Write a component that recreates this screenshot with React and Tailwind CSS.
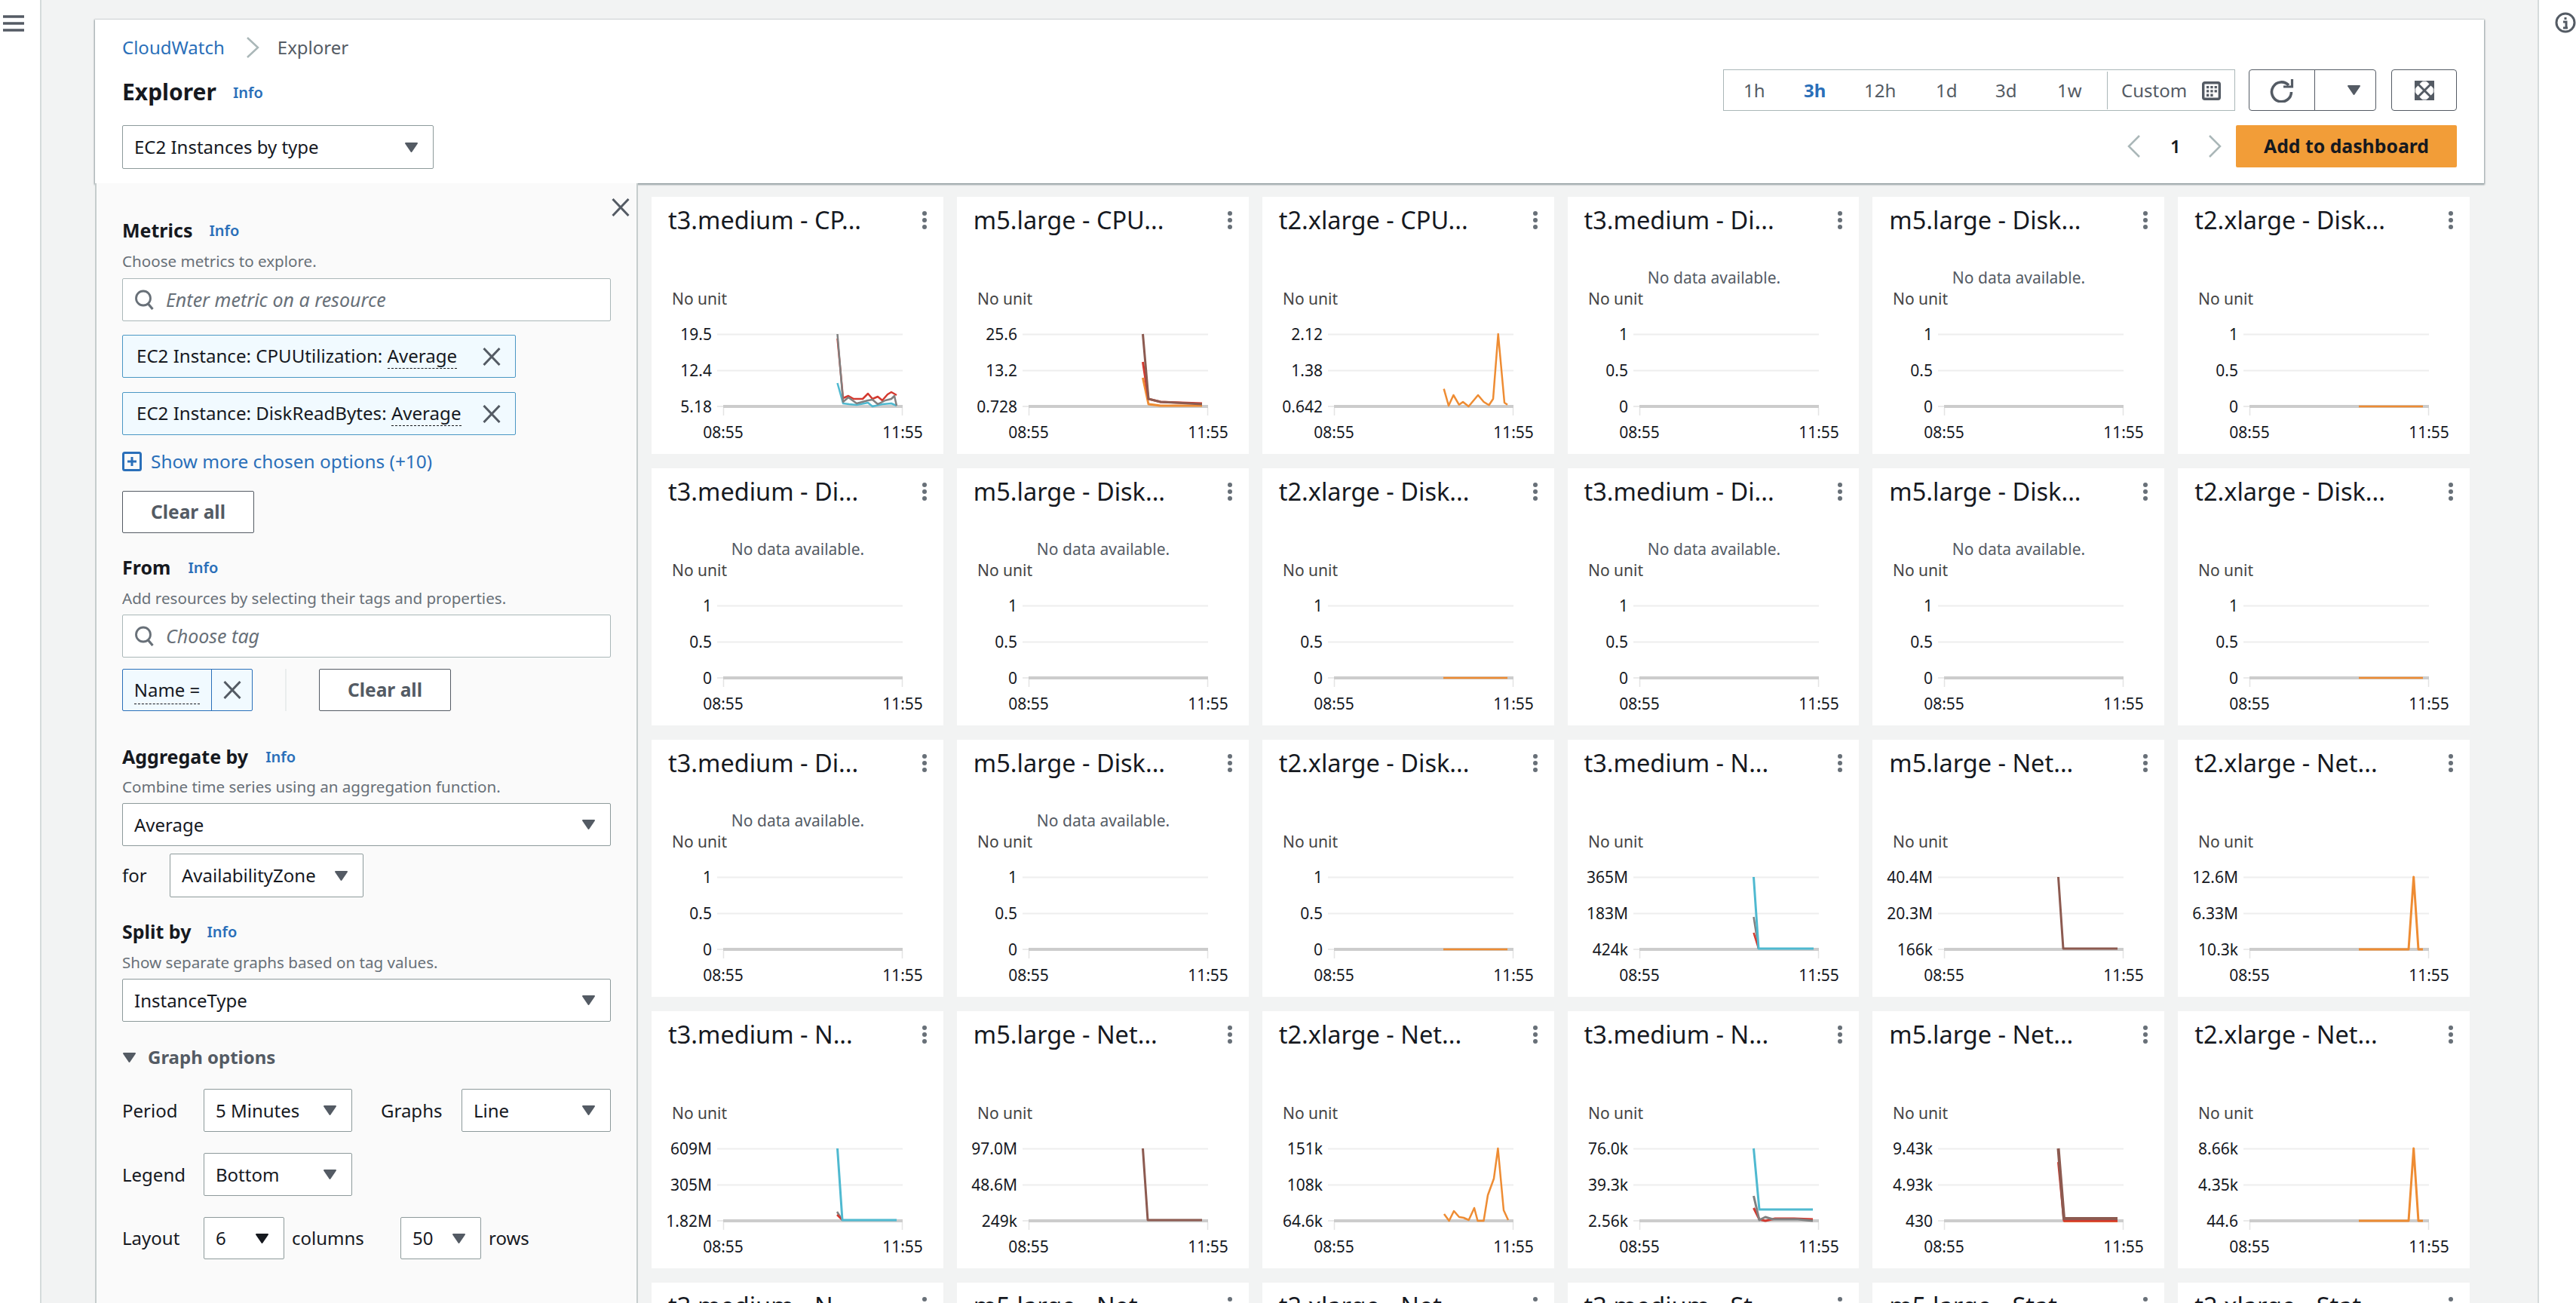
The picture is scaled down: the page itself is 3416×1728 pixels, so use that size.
import React from 'react';

const RED = '#d3392f';
const TEAL = '#4fb9d0';
const GRAY = '#808080';
const BROWN = '#8c5a50';
const ORANGE = '#ee8c33';

const Caret = ({ dark }) => (
    <svg width="19" height="15" viewBox="0 0 19 15" className="shrink-0">
        <path d="M2 2h15l-7.500 11z" fill={dark ? '#16191f' : '#545b64'} stroke={dark ? '#16191f' : '#545b64'} strokeWidth="2" strokeLinejoin="round" />
    </svg>
);

const CloseIcon = ({ size = 24 }) => (
    <svg width={size} height={size} viewBox="0 0 24 24" className="shrink-0">
        <path d="M1.500 1l21 22M22.500 1l-21 22" stroke="#545b64" strokeWidth="3" fill="none" />
    </svg>
);

const SearchIcon = () => (
    <svg width="27" height="27" viewBox="0 0 27 27" className="shrink-0">
        <circle cx="12" cy="11.500" r="9.500" stroke="#687078" strokeWidth="2.800" fill="none" />
        <path d="M18.500 19l6 7" stroke="#687078" strokeWidth="3.200" fill="none" />
    </svg>
);

const Info = () => <span className="text-[20px] font-semibold text-[#2a6fb9]">Info</span>;

const Heading = ({ title, gap, className }) => (
    <div className={`flex h-[36px] items-center ${className}`}>
        <span className="text-[25px] font-bold text-[#16191f]">{title}</span>
        <span className={gap}><Info /></span>
    </div>
);

const Desc = ({ children, className }) => (
    <div className={`h-[30px] text-[20.600px] leading-[30px] text-[#687078] ${className}`}>{children}</div>
);

const Select = ({ value, className, darkCaret }) => (
    <div className={`flex items-center justify-between rounded-[2px] border border-[#8d9a9b] bg-white pl-[15px] pr-[19px] text-[24px] text-[#16191f] ${className}`}>
        <span>{value}</span>
        <Caret dark={darkCaret} />
    </div>
);

const Autosuggest = ({ placeholder, className }) => (
    <div className={`flex h-[57px] items-center gap-[15px] rounded-[2px] border border-[#aab7b8] bg-white pl-[15px] ${className}`}>
        <SearchIcon />
        <span className="text-[25px] italic text-[#687078]">{placeholder}</span>
    </div>
);

const Token = ({ label, className }) => (
    <div className={`flex h-[57px] w-[522px] items-center justify-between rounded-[2px] border border-[#4a97c4] bg-[#f1faff] pl-[18px] pr-[19px] ${className}`}>
        <span className="text-[24.100px] text-[#16191f]">
            EC2 Instance: {label}: <span className="border-b border-dashed border-[#16191f]">Average</span>
        </span>
        <CloseIcon />
    </div>
);

const ClearAll = ({ className }) => (
    <div className={`flex h-[56px] w-[175px] items-center justify-center rounded-[2px] border border-[#545b64] bg-white text-[24.500px] font-bold text-[#545b64] ${className}`}>Clear all</div>
);

const Sidebar = () => (
    <aside className="w-[720px] shrink-0 border-x-2 border-[#c6cdcd] bg-[#fafafa] pl-[34px] pr-[34px]">
        <div className="-mr-[25px] flex justify-end pt-[20px]"><CloseIcon /></div>
        <Heading title="Metrics" gap="ml-[22px]" className="mt-[1px]" />
        <Desc className="mt-[7px]">Choose metrics to explore.</Desc>
        <Autosuggest placeholder="Enter metric on a resource" className="mt-[8px]" />
        <Token label="CPUUtilization" className="mt-[18px]" />
        <Token label="DiskReadBytes" className="mt-[19px]" />
        <div className="mt-[20px] flex h-[30px] items-center gap-[12px] text-[24.400px] text-[#2a6fb9]">
            <svg width="26" height="26" viewBox="0 0 26 26">
                <rect x="1.500" y="1.500" width="23" height="23" rx="2" stroke="#2a6fb9" strokeWidth="3" fill="none" />
                <path d="M13 7v12M7 13h12" stroke="#2a6fb9" strokeWidth="3" />
            </svg>
            <span>Show more chosen options (+10)</span>
        </div>
        <ClearAll className="mt-[24px]" />
        <Heading title="From" gap="ml-[23px]" className="mt-[28px]" />
        <Desc className="mt-[7px]">Add resources by selecting their tags and properties.</Desc>
        <Autosuggest placeholder="Choose tag" className="mt-[7px]" />
        <div className="mt-[15px] flex h-[56px] items-center">
            <div className="flex h-full w-[173px] rounded-[2px] border border-[#2a6fb9] bg-[#f1faff]">
                <div className="flex w-[118px] items-center justify-center border-r border-[#2a6fb9]">
                    <span className="border-b border-dashed border-[#16191f] text-[24px] text-[#16191f]">Name =</span>
                </div>
                <div className="flex flex-1 items-center justify-center"><CloseIcon /></div>
            </div>
            <div className="ml-[43px] h-full w-[2px] bg-[#eaeded]" />
            <ClearAll className="ml-[43px]" />
        </div>
        <Heading title="Aggregate by" gap="ml-[23px]" className="mt-[43px]" />
        <Desc className="mt-[6px]">Combine time series using an aggregation function.</Desc>
        <Select value="Average" className="mt-[7px] h-[57px]" />
        <div className="mt-[10px] flex h-[58px] items-center">
            <span className="w-[63px] text-[24px] text-[#16191f]">for</span>
            <Select value="AvailabilityZone" className="h-full w-[257px]" />
        </div>
        <Heading title="Split by" gap="ml-[21px]" className="mt-[28px]" />
        <Desc className="mt-[7px]">Show separate graphs based on tag values.</Desc>
        <Select value="InstanceType" className="mt-[7px] h-[57px]" />
        <div className="mt-[32px] flex h-[30px] items-center gap-[15px]">
            <Caret />
            <span className="text-[24px] font-bold text-[#545b64]">Graph options</span>
        </div>
        <div className="mt-[27px] flex h-[57px] items-center text-[24px] text-[#16191f]">
            <span className="w-[108px]">Period</span>
            <Select value="5 Minutes" className="h-full w-[197px]" />
            <span className="ml-[38px] w-[107px]">Graphs</span>
            <Select value="Line" className="h-full w-[198px]" />
        </div>
        <div className="mt-[28px] flex h-[57px] items-center text-[24px] text-[#16191f]">
            <span className="w-[108px]">Legend</span>
            <Select value="Bottom" className="h-full w-[197px]" />
        </div>
        <div className="mt-[28px] flex h-[56px] items-center text-[24px] text-[#16191f]">
            <span className="w-[108px]">Layout</span>
            <Select value="6" darkCaret className="h-full w-[107px]" />
            <span className="ml-[10px] w-[144px]">columns</span>
            <Select value="50" className="h-full w-[107px]" />
            <span className="ml-[10px]">rows</span>
        </div>
    </aside>
);

const GraphCard = ({ title, labels, series = [], empty }) => (
    <div className="h-[341px] bg-white">
        <div className="flex h-[62px] items-center justify-between pl-[22px] pr-[21px]">
            <span className="text-[32.500px] text-[#16191f]">{title}</span>
            <svg width="8" height="26" viewBox="0 0 8 26">
                <circle cx="4" cy="4" r="3" fill="#687078" />
                <circle cx="4" cy="13" r="3" fill="#687078" />
                <circle cx="4" cy="22" r="3" fill="#687078" />
            </svg>
        </div>
        <svg width="387" height="279" viewBox="0 62 387 279" className="block" fontFamily="'Noto Sans', sans-serif">
            {empty && <text x="194" y="115" textAnchor="middle" fontSize="21" fill="#545b64">No data available.</text>}
            <text x="27" y="143" fontSize="21" fill="#444444">No unit</text>
            <path d="M87 182.500h246M87 230.500h246" stroke="#eeeeee" strokeWidth="2" />
            <path d="M87 278h8M95.500 280v10M332.500 280v10" stroke="#e4e4e4" strokeWidth="1.500" fill="none" />
            <path d="M95 278h238" stroke="#cccccc" strokeWidth="4" />
            {labels.map((label, i) => (
                <text key={label} x="80" y={190 + i * 48} textAnchor="end" fontSize="21" fill="#16191f">{label}</text>
            ))}
            <text x="95" y="320" textAnchor="middle" fontSize="21" fill="#16191f">08:55</text>
            <text x="333" y="320" textAnchor="middle" fontSize="21" fill="#16191f">11:55</text>
            {series.map((s, i) => (
                <polyline key={i} points={s.points} stroke={s.color} strokeWidth={s.width || 2.500} fill="none" strokeLinejoin="round" />
            ))}
        </svg>
    </div>
);

const FLAT_T2 = [{ color: ORANGE, points: '240,278 325,278' }];
const SPIKE_T2 = [{ color: ORANGE, points: '240,278 306,278 312.700,182 319,278 325,278', width: 3 }];
const NO_DATA = ['1', '0.5', '0'];

const GRAPHS = [
    { title: 't3.medium - CP...', labels: ['19.5', '12.4', '5.18'], series: [
        { color: RED, points: '246.500,188 254,267 261,264 268,268 280,268 287,261 293,268 300,265 306,270 313,262 318,259 325,263' },
        { color: TEAL, points: '246.500,247 254,274 262,275 272,276 287,273 293,278 306,275 318,274 325,277' },
        { color: GRAY, points: '246.500,182 254,272 261,266 272,274 287,270 293,269 300,275 310,270 318,268 322,264 325,277' },
    ] },
    { title: 'm5.large - CPU...', labels: ['25.6', '13.2', '0.728'], series: [
        { color: ORANGE, points: '246.500,240 254,275 270,277 325,277', width: 3 },
        { color: RED, points: '246.500,219 254,268 270,272 325,274', width: 3 },
        { color: BROWN, points: '246.500,182 254,268 270,272 290,273 325,275', width: 3 },
    ] },
    { title: 't2.xlarge - CPU...', labels: ['2.12', '1.38', '0.642'], series: [
        { color: ORANGE, points: '240.700,254.700 247,277 253.400,263 260.800,275.700 266,272 273.500,278 286,263 293.600,272 300.500,276.300 306,268 312.700,182 321,273 325,275.700' },
    ] },
    { title: 't3.medium - Di...', labels: NO_DATA, empty: true },
    { title: 'm5.large - Disk...', labels: NO_DATA, empty: true },
    { title: 't2.xlarge - Disk...', labels: NO_DATA, series: FLAT_T2 },
    { title: 't3.medium - Di...', labels: NO_DATA, empty: true },
    { title: 'm5.large - Disk...', labels: NO_DATA, empty: true },
    { title: 't2.xlarge - Disk...', labels: NO_DATA, series: FLAT_T2 },
    { title: 't3.medium - Di...', labels: NO_DATA, empty: true },
    { title: 'm5.large - Disk...', labels: NO_DATA, empty: true },
    { title: 't2.xlarge - Disk...', labels: NO_DATA, series: FLAT_T2 },
    { title: 't3.medium - Di...', labels: NO_DATA, empty: true },
    { title: 'm5.large - Disk...', labels: NO_DATA, empty: true },
    { title: 't2.xlarge - Disk...', labels: NO_DATA, series: FLAT_T2 },
    { title: 't3.medium - N...', labels: ['365M', '183M', '424k'], series: [
        { color: GRAY, points: '246.500,235 253,277' },
        { color: RED, points: '246.500,256 253,277' },
        { color: TEAL, points: '246.500,182 253,277 326,277', width: 3 },
    ] },
    { title: 'm5.large - Net...', labels: ['40.4M', '20.3M', '166k'], series: [
        { color: BROWN, points: '246.500,182 253,277 325,277', width: 3 },
    ] },
    { title: 't2.xlarge - Net...', labels: ['12.6M', '6.33M', '10.3k'], series: SPIKE_T2 },
    { title: 't3.medium - N...', labels: ['609M', '305M', '1.82M'], series: [
        { color: GRAY, points: '246,266 253,277' },
        { color: RED, points: '246,270 253,277' },
        { color: TEAL, points: '246.500,182 253,277 325,277', width: 3 },
    ] },
    { title: 'm5.large - Net...', labels: ['97.0M', '48.6M', '249k'], series: [
        { color: BROWN, points: '246.500,182 253,277 325,277', width: 3 },
    ] },
    { title: 't2.xlarge - Net...', labels: ['151k', '108k', '64.6k'], series: [
        { color: ORANGE, points: '241,269 247.600,278 254,265 261,273 267,274 273.700,277 281,261 285.500,278 293.500,278 299,244 307,222 312.400,182 320,264 326,277' },
    ] },
    { title: 't3.medium - N...', labels: ['76.0k', '39.3k', '2.56k'], series: [
        { color: TEAL, points: '246.500,182 254,263 325,263', width: 3 },
        { color: RED, points: '246.500,261 254,276 262,278 275,275 300,275 325,276', width: 3 },
        { color: GRAY, points: '246.500,245 254,277 262,273 272,276 285,276 305,276 325,278', width: 3 },
    ] },
    { title: 'm5.large - Net...', labels: ['9.43k', '4.93k', '430'], series: [
        { color: ORANGE, points: '254,279 325,279', width: 2 },
        { color: RED, points: '246.500,200 254,278 325,278', width: 3 },
        { color: BROWN, points: '246.500,182 254,275 325,275', width: 4 },
    ] },
    { title: 't2.xlarge - Net...', labels: ['8.66k', '4.35k', '44.6'], series: SPIKE_T2 },
    { title: 't3.medium - N...', labels: [] },
    { title: 'm5.large - Net...', labels: [] },
    { title: 't2.xlarge - Net...', labels: [] },
    { title: 't3.medium - St...', labels: [] },
    { title: 'm5.large - Stat...', labels: [] },
    { title: 't2.xlarge - Stat...', labels: [] },
];

const TimeRange = () => (
    <div className="flex h-[55px] w-[679px] items-center border border-[#aab7b8] text-[24px] text-[#545b64]">
        <span className="w-[80px] pl-[26px]">1h</span>
        <span className="w-[80px] pl-[26px] font-bold text-[#2a6fb9]">3h</span>
        <span className="w-[90px] pl-[26px]">12h</span>
        <span className="w-[86px] pl-[31px]">1d</span>
        <span className="w-[80px] pl-[24px]">3d</span>
        <span className="w-[92px] pl-[26px]">1w</span>
        <div className="flex h-[50px] flex-1 items-center justify-between border-l border-[#aab7b8] pl-[18px] pr-[18px]">
            <span>Custom</span>
            <svg width="25" height="26" viewBox="0 0 25 26">
                <rect x="1.700" y="2.700" width="21.600" height="21.600" rx="2" fill="#ffffff" stroke="#545b64" strokeWidth="3.400" />
                <path d="M6 7h3.300v3.300H6zM11.300 7h3.300v3.300h-3.300zM16.600 7h3.300v3.300h-3.300zM6 12.300h3.300v3.300H6zM11.300 12.300h3.300v3.300h-3.300zM16.600 12.300h3.300v3.300h-3.300zM6 17.600h3.300v3.300H6zM11.300 17.600h3.300v3.300h-3.300z" fill="#545b64" />
            </svg>
        </div>
    </div>
);

const Header = () => (
    <header className="flex h-[217px] justify-between bg-white pl-[36px] pr-[36px] shadow-[0_1px_2px_1px_rgba(0,28,36,0.4)]">
        <div>
            <div className="mt-[22px] flex h-[30px] items-center text-[24px]">
                <span className="text-[#2a6fb9]">CloudWatch</span>
                <svg width="18" height="28" viewBox="0 0 18 28" className="ml-[28px] mr-[24px]">
                    <path d="M2 1l14 13L2 27" stroke="#aab7b8" strokeWidth="2.500" fill="none" />
                </svg>
                <span className="text-[#545b64]">Explorer</span>
            </div>
            <div className="mt-[23px] flex h-[40px] items-center gap-[22px]">
                <span className="text-[30px] font-bold text-[#16191f]">Explorer</span>
                <span className="pt-[3px]"><Info /></span>
            </div>
            <Select value="EC2 Instances by type" className="mt-[25px] h-[58px] w-[413px]" />
        </div>
        <div className="flex flex-col items-end pt-[66px]">
            <div className="flex items-center">
                <TimeRange />
                <div className="ml-[18px] flex h-[55px] w-[88px] items-center justify-center rounded-l-[4px] border border-[#545b64]">
                    <svg width="32" height="32" viewBox="0 0 32 32">
                        <path d="M25 9A13 13 0 1 0 28.500 18" stroke="#545b64" strokeWidth="3.600" fill="none" />
                        <path d="M18 11h11.500V1" stroke="#545b64" strokeWidth="3.200" fill="none" />
                    </svg>
                </div>
                <div className="-ml-px flex h-[55px] w-[82px] items-center justify-center rounded-r-[4px] border border-[#545b64] pl-[22px]">
                    <Caret />
                </div>
                <div className="ml-[20px] flex h-[55px] w-[87px] items-center justify-center rounded-[4px] border border-[#545b64]">
                    <svg width="26" height="26" viewBox="0 0 26 26">
                        <path d="M0 0h11L0 11zM26 0H15l11 11zM0 26h11L0 15zM26 26H15l11-11z" fill="#545b64" />
                        <path d="M3 3l20 20M23 3L3 23" stroke="#545b64" strokeWidth="3" />
                        <path d="M0 .75h26M0 25.250h26M.75 0v26M25.250 0v26" stroke="#545b64" strokeWidth="1.500" opacity="0.550" />
                    </svg>
                </div>
            </div>
            <div className="mt-[19px] flex items-center">
                <svg width="20" height="30" viewBox="0 0 20 30">
                    <path d="M17 1L3 15l14 14" stroke="#aab7b8" strokeWidth="2.500" fill="none" />
                </svg>
                <span className="ml-[38px] w-[16px] text-[24px] font-semibold text-[#16191f]">1</span>
                <svg width="20" height="30" viewBox="0 0 20 30" className="ml-[33px]">
                    <path d="M3 1l14 14L3 29" stroke="#aab7b8" strokeWidth="2.500" fill="none" />
                </svg>
                <div className="ml-[18px] flex h-[56px] w-[293px] items-center justify-center rounded-[2px] bg-[#f29d38] text-[24.800px] font-bold text-[#16191f]">Add to dashboard</div>
            </div>
        </div>
    </header>
);

export default function App() {
    return (
        <div className="flex h-[1728px] overflow-hidden bg-[#f2f3f3] font-['Noto_Sans',sans-serif]">
            <nav className="w-[55px] shrink-0 border-r-2 border-[#d5dbdb] bg-white pl-[4px] pt-[20px]">
                <svg width="28" height="22" viewBox="0 0 28 22">
                    <path d="M0 2h28M0 11h28M0 20h28" stroke="#545b64" strokeWidth="3.500" />
                </svg>
            </nav>
            <main className="min-w-0 flex-1 pl-[71px] pr-[71px] pt-[26px]">
                <Header />
                <div className="flex">
                    <Sidebar />
                    <div className="grid flex-1 grid-cols-6 gap-x-[18px] gap-y-[19px] pl-[18px] pr-[19px] pt-[18px]">
                        {GRAPHS.map((graph, i) => (
                            <GraphCard key={i} {...graph} />
                        ))}
                    </div>
                </div>
            </main>
            <aside className="w-[51px] shrink-0 border-l-2 border-[#d5dbdb] bg-white pl-[21px] pt-[16px]">
                <svg width="28" height="28" viewBox="0 0 28 28">
                    <circle cx="14" cy="14" r="12" stroke="#545b64" strokeWidth="3" fill="none" />
                    <path d="M14 7v3M11 13h4v8M11 21h6" stroke="#545b64" strokeWidth="3" fill="none" />
                </svg>
            </aside>
        </div>
    );
}
